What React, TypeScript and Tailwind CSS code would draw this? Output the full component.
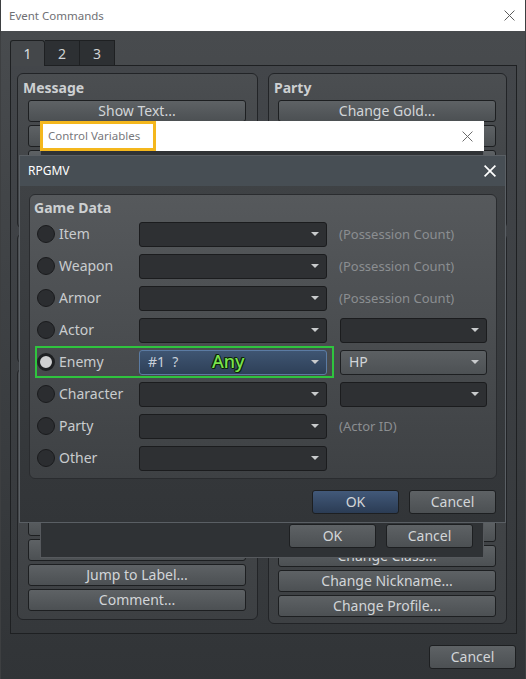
import type { ReactNode } from 'react';

const btnBase =
  'flex shrink-0 items-center justify-center rounded-[3px] border border-[#1d1f21] text-[14px] leading-none text-[#d2d5d8]';
const btnGray = 'bg-linear-to-b from-[#5e6265] to-[#4c5053]';
const btnBlue = 'bg-linear-to-b from-[#42597a] to-[#2b3c54]';

function Button({ label, className = '', primary = false }: { label: string; className?: string; primary?: boolean }) {
  return <div className={`${btnBase} ${primary ? btnBlue : btnGray} ${className}`}>{label}</div>;
}

function CloseIcon({ size, color, width }: { size: number; color: string; width: number }) {
  return (
    <svg width={size} height={size} viewBox="0 0 10 10" fill="none">
      <path d="M0.5 0.5 L9.5 9.5 M9.5 0.5 L0.5 9.5" stroke={color} strokeWidth={width} />
    </svg>
  );
}

// buttons hidden under the dialogs keep no caption
function GroupBox({
  title,
  buttons,
  grow = false,
  pb = 'pb-[6px]',
  pl = 'pl-[10px]',
}: {
  title: string;
  buttons: string[];
  grow?: boolean;
  pb?: string;
  pl?: string;
}) {
  return (
    <div
      className={`flex flex-col rounded-[6px] border border-[#222427] bg-linear-to-b from-[#4b4e51] to-[#3d4043] pt-[4px] ${pb} ${grow ? 'flex-1' : ''}`}
    >
      <div className="h-[20px] pl-[5px] text-[14px] font-bold leading-[20px] text-[#cdd0d2]">{title}</div>
      {grow && <div className="flex-1" />}
      <div className={`mt-[2px] flex flex-col gap-[3px] ${pl}`}>
        {buttons.map((b, i) => (
          <Button key={i} label={b} className="h-[22px] w-[218px]" />
        ))}
      </div>
    </div>
  );
}

function Arrow() {
  return (
    <div className="h-0 w-0 border-x-[4px] border-t-[4px] border-x-transparent border-t-[#c9cbcd]" />
  );
}

function Combo({
  width,
  variant = 'dark',
  children,
}: {
  width: string;
  variant?: 'dark' | 'gray' | 'blue';
  children?: ReactNode;
}) {
  const skin =
    variant === 'blue'
      ? 'border-[#5b7ba3] bg-linear-to-b from-[#3f5572] to-[#2e4058] text-[#c8d0da]'
      : variant === 'gray'
        ? 'border-[#1d1f21] bg-linear-to-b from-[#5c6063] to-[#4d5154] text-[#d2d5d8]'
        : 'border-[#1b1c1e] bg-[#2e3033] text-[#d2d5d8]';
  return (
    <div className={`relative flex h-[25px] shrink-0 items-center justify-between rounded-[3px] border pl-[8px] pr-[7px] ${width} ${skin}`}>
      <div className="text-[14px] leading-none whitespace-pre">{children}</div>
      <Arrow />
    </div>
  );
}

type Row = {
  label: string;
  hint?: string;
  second?: 'empty' | 'HP';
  selected?: boolean;
};

const rows: Row[] = [
  { label: 'Item', hint: '(Possession Count)' },
  { label: 'Weapon', hint: '(Possession Count)' },
  { label: 'Armor', hint: '(Possession Count)' },
  { label: 'Actor', second: 'empty' },
  { label: 'Enemy', second: 'HP', selected: true },
  { label: 'Character', second: 'empty' },
  { label: 'Party', hint: '(Actor ID)' },
  { label: 'Other' },
];

function Radio({ on }: { on?: boolean }) {
  return on ? (
    <div className="h-[18px] w-[18px] shrink-0 rounded-full border-[3px] border-[#1e2022] bg-[#cfd0d1]" />
  ) : (
    <div className="h-[18px] w-[18px] shrink-0 rounded-full border border-[#1a1b1d] bg-[#2b2d30]" />
  );
}

function DataRow({ row }: { row: Row }) {
  return (
    <div className="relative flex h-[32px] items-center pl-[7px]">
      <Radio on={row.selected} />
      <div className="ml-[4px] w-[80px] text-[14px] leading-none text-[#c9ccce]">{row.label}</div>
      {row.selected ? (
        <Combo width="w-[188px]" variant="blue">
          {'#1  ?'}
        </Combo>
      ) : (
        <Combo width="w-[188px]" />
      )}
      {row.hint && <div className="ml-[12px] text-[13px] leading-none text-[#8b8e91]">{row.hint}</div>}
      {row.second === 'empty' && (
        <div className="ml-[13px]">
          <Combo width="w-[147px]" />
        </div>
      )}
      {row.second === 'HP' && (
        <div className="ml-[13px]">
          <Combo width="w-[147px]" variant="gray">
            HP
          </Combo>
        </div>
      )}
      {row.selected && (
        <>
          <div className="pointer-events-none absolute left-[5px] top-0 h-[32px] w-[299px] border-2 border-[#2fc43e]" />
          <div className="absolute left-[182px] top-[5px] text-[18px] leading-[20px] font-medium text-[#7be34d] [text-shadow:1px_0_0_#0c240c,-1px_0_0_#0c240c,0_1px_0_#0c240c,0_-1px_0_#0c240c,1px_1px_0_#0c240c,-1px_-1px_0_#0c240c]">
            Any
          </div>
        </>
      )}
    </div>
  );
}

const messageButtons = ['Show Text...', '', '', '', ''];
const progressButtons = ['', '', '', ''];
const flowButtons = ['', '', '', '', '', '', 'Jump to Label...', 'Comment...'];
const partyButtons = ['Change Gold...', '', '', '', ''];
const actorButtons = ['', '', '', '', '', '', '', '', '', '', '', 'Change Class...', 'Change Nickname...', 'Change Profile...'];

export default function App() {
  return (
    <div className="relative h-[679px] w-[526px] overflow-hidden bg-[#2e3134] font-['Noto_Sans',sans-serif]">
      {/* Event Commands window */}
      <div className="flex h-full flex-col border-x border-[#3d3f41]">
        <div className="flex h-[31px] shrink-0 items-center justify-between bg-white pl-[8px] pr-[10px]">
          <span className="text-[11.5px] text-[#6f6f74]">Event Commands</span>
          <CloseIcon size={11} color="#5a5a5a" width={0.9} />
        </div>
        <div className="flex flex-1 flex-col bg-linear-to-b from-[#484b4e] to-[#313437] pl-[9px] pt-[9px]">
          {/* tabs */}
          <div className="relative z-10 flex h-[25px] items-start">
            <div className="-mb-[1px] flex h-[26px] w-[35px] items-center justify-center rounded-t-[3px] border-x border-t border-[#1e2022] bg-[#44474a] text-[14px] text-[#dcdfe1]">
              1
            </div>
            <div className="flex h-[25px] w-[35px] items-center justify-center border-r border-t border-[#1e2022] bg-[#2d3033] text-[14px] text-[#cfd2d4]">
              2
            </div>
            <div className="flex h-[25px] w-[35px] items-center justify-center border-r border-t border-[#1e2022] bg-[#2d3033] text-[14px] text-[#cfd2d4]">
              3
            </div>
          </div>
          {/* pane */}
          <div className="flex h-[569px] w-[507px] gap-[10px] border border-[#1e2022] bg-linear-to-b from-[#43464a] to-[#35383b] pl-[6px] pr-[9px] pt-[7px]">
            <div className="flex w-[241px] flex-col gap-[4px] pb-[13px]">
              <GroupBox title="Message" buttons={messageButtons} />
              <GroupBox title="" buttons={progressButtons} />
              <GroupBox title="" buttons={flowButtons} grow pb="pb-[8px]" />
            </div>
            <div className="flex w-[239px] flex-col gap-[4px] pb-[9px]">
              <GroupBox title="Party" buttons={partyButtons} pl="pl-[9px]" />
              <GroupBox title="" buttons={actorButtons} grow pb="pb-[6px]" pl="pl-[9px]" />
            </div>
          </div>
          <div className="mt-[11px] flex w-[507px] justify-end pr-[1px]">
            <Button label="Cancel" className="h-[24px] w-[87px]" />
          </div>
        </div>
      </div>

      {/* Control Variables window */}
      <div className="absolute left-[40px] top-[121px] flex h-[437px] w-[444px] flex-col">
        <div className="relative flex h-[30px] shrink-0 items-center justify-end bg-white pr-[11px]">
          <div className="absolute left-0 top-0 flex h-[30px] w-[116px] items-center border-[3px] border-[#f4b71d] pl-[5px] text-[11.5px] text-[#77777c]">
            Control Variables
          </div>
          <CloseIcon size={11} color="#6a6a6a" width={0.9} />
        </div>
        <div className="flex flex-1 items-end justify-end gap-[10px] border-x border-b border-[#56595d] bg-[#2f3235] pb-[9px] pr-[10px]">
          <Button label="OK" className="h-[24px] w-[87px]" />
          <Button label="Cancel" className="h-[24px] w-[87px]" />
        </div>
      </div>

      {/* RPGMV dialog */}
      <div className="absolute left-[19px] top-[155px] flex h-[368px] w-[487px] flex-col border border-[#5a5f64] bg-linear-to-b from-[#404346] to-[#323538]">
        <div className="flex h-[30px] shrink-0 items-center justify-between bg-[#474e54] pl-[8px] pr-[9px]">
          <span className="text-[12px] text-white">RPGMV</span>
          <CloseIcon size={12} color="#ffffff" width={1.4} />
        </div>
        <div className="flex flex-col px-[9px] pt-[8px]">
          <div className="flex h-[285px] w-[468px] flex-col rounded-[6px] border border-[#2a2c2f] bg-linear-to-b from-[#56595c] to-[#3e4144] pt-[3px]">
            <div className="h-[20px] pl-[4px] text-[14px] font-bold leading-[20px] text-[#cdd0d2]">Game Data</div>
            {rows.map((r) => (
              <DataRow key={r.label} row={r} />
            ))}
          </div>
          <div className="mt-[11px] flex justify-end gap-[10px]">
            <Button label="OK" primary className="h-[24px] w-[87px]" />
            <Button label="Cancel" className="h-[24px] w-[87px]" />
          </div>
        </div>
      </div>
    </div>
  );
}
